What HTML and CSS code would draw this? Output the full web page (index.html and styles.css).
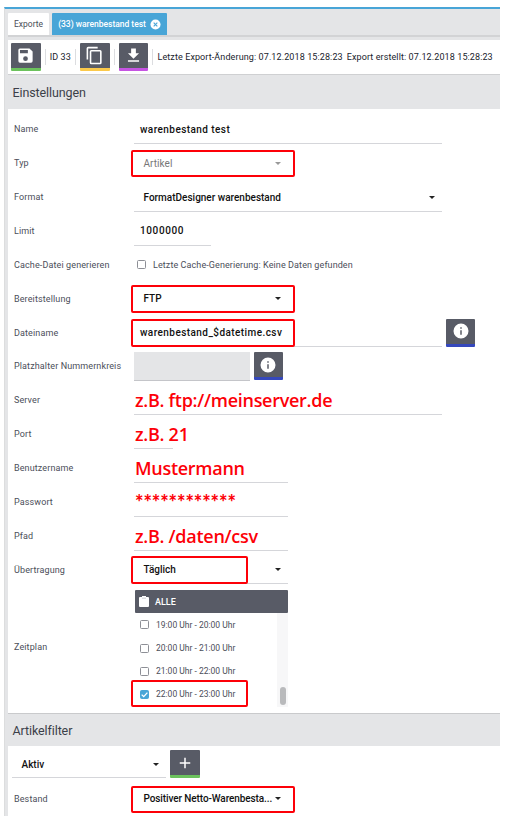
FILE: index.html
```
<!DOCTYPE html>
<html lang="de">
<head>
<meta charset="utf-8">
<title>Exporte</title>
<link rel="stylesheet" href="styles.css">
</head>
<body>
<main class="app">
  <nav class="tabs">
    <span class="tab">Exporte</span>
    <span class="tab tab-active"><span class="tab-text">(33) warenbestand test</span>
      <svg class="close" viewBox="0 0 12 12"><circle cx="6" cy="6" r="5.5" fill="#fff"/><path d="M4 4l4 4M8 4L4 8" stroke="#48a5d7" stroke-width="1.2"/></svg>
    </span>
  </nav>
  <header class="toolbar">
    <button class="btn green"><svg viewBox="0 0 24 24"><path fill="#fff" d="M17 3H5a2 2 0 0 0-2 2v14a2 2 0 0 0 2 2h14a2 2 0 0 0 2-2V7l-4-4zm-5 16a3 3 0 1 1 0-6 3 3 0 0 1 0 6zm3-10H5V5h10v4z"/></svg></button>
    <i class="sep"></i><span class="id">ID 33</span><i class="sep"></i>
    <button class="btn yellow"><svg viewBox="0 0 24 24"><path fill="#fff" d="M16 1H4a2 2 0 0 0-2 2v14h2V3h12V1zm3 4H8a2 2 0 0 0-2 2v14a2 2 0 0 0 2 2h11a2 2 0 0 0 2-2V7a2 2 0 0 0-2-2zm0 16H8V7h11v14z"/></svg></button>
    <i class="sep"></i>
    <button class="btn purple"><svg viewBox="0 0 24 24"><path fill="#fff" d="M19 9h-4V3H9v6H5l7 7 7-7zM5 18v2h14v-2H5z"/></svg></button>
    <i class="sep"></i>
    <span class="info changed">Letzte Export-Änderung: 07.12.2018 15:28:23</span>
    <span class="info created">Export erstellt: 07.12.2018 15:28:23</span>
  </header>

  <h2 class="heading">Einstellungen</h2>
  <section class="panel">
    <div class="row"><label>Name</label><div class="field wide"><span class="input">warenbestand test</span></div></div>
    <div class="row"><label>Typ</label><div class="field mid plain"><span class="select muted">Artikel</span><i class="caret muted"></i><b class="mark"></b></div></div>
    <div class="row"><label>Format</label><div class="field wide"><span class="select format">FormatDesigner warenbestand</span><i class="caret"></i></div></div>
    <div class="row"><label>Limit</label><div class="field small"><span class="input limit">1000000</span></div></div>
    <div class="row"><label>Cache-Datei generieren</label><div class="field wide plain"><i class="check"></i><span class="hint">Letzte Cache-Generierung: Keine Daten gefunden</span></div></div>
    <div class="row"><label>Bereitstellung</label><div class="field mid plain"><span class="select">FTP</span><i class="caret"></i><b class="mark"></b></div></div>
    <div class="row"><label>Dateiname</label><div class="field wide"><span class="input file">warenbestand_$datetime.csv</span><b class="mark"></b></div><button class="btn blue"><svg viewBox="0 0 24 24"><path fill="#fff" d="M12 2a10 10 0 1 0 0 20 10 10 0 0 0 0-20zm1 15h-2v-6h2v6zm0-8h-2V7h2v2z"/></svg></button></div>
    <div class="row"><label class="platz">Platzhalter Nummernkreis</label><div class="field disabled"></div><button class="btn blue"><svg viewBox="0 0 24 24"><path fill="#fff" d="M12 2a10 10 0 1 0 0 20 10 10 0 0 0 0-20zm1 15h-2v-6h2v6zm0-8h-2V7h2v2z"/></svg></button></div>
    <div class="row"><label>Server</label><div class="field wide"><span class="note server">z.B. ftp://meinserver.de</span></div></div>
    <div class="row"><label>Port</label><div class="field tiny"><span class="note">z.B. 21</span></div></div>
    <div class="row"><label>Benutzername</label><div class="field mid"><span class="note user">Mustermann</span></div></div>
    <div class="row"><label>Passwort</label><div class="field mid"><span class="note stars">************</span></div></div>
    <div class="row"><label>Pfad</label><div class="field mid"><span class="note path">z.B. /daten/csv</span></div></div>
    <div class="row"><label>Übertragung</label><div class="field mid"><span class="select">Täglich</span><i class="caret"></i><b class="mark short"></b></div></div>
    <div class="row schedule"><label>Zeitplan</label>
      <div class="times">
        <div class="all"><svg viewBox="0 0 10 11"><path fill="#fff" d="M1 1h2V0h4v1h2q1 0 1 1v8q0 1-1 1H1q-1 0-1-1V2q0-1 1-1z"/><path d="M3 2.2h4" stroke="#bbbdc3" stroke-width=".7"/></svg><span>ALLE</span></div>
        <div class="list">
          <div class="options">
            <div class="option"><i class="check"></i><span>19:00 Uhr - 20:00 Uhr</span></div>
            <div class="option"><i class="check"></i><span>20:00 Uhr - 21:00 Uhr</span></div>
            <div class="option"><i class="check"></i><span>21:00 Uhr - 22:00 Uhr</span></div>
            <div class="option"><i class="check on"><svg viewBox="0 0 9 9"><path d="M1.7 4.6l2 2 3.7-4" fill="none" stroke="#fff" stroke-width="1.3"/></svg></i><span>22:00 Uhr - 23:00 Uhr</span><b class="mark short"></b></div>
          </div>
          <div class="track"><div class="thumb"></div></div>
        </div>
      </div>
    </div>
  </section>

  <h2 class="heading second">Artikelfilter</h2>
  <section class="panel filter">
    <div class="add"><div class="field mid"><span class="select">Aktiv</span><i class="caret"></i></div><button class="btn green"><svg viewBox="0 0 24 24"><path fill="#fff" d="M19 13h-6v6h-2v-6H5v-2h6V5h2v6h6z"/></svg></button></div>
    <div class="row"><label>Bestand</label><div class="field mid plain"><span class="select stock">Positiver Netto-Warenbesta...</span><i class="caret"></i><b class="mark"></b></div></div>
  </section>
</main>
</body>
</html>
```
FILE: styles.css
```
* { box-sizing: border-box; }
body { margin: 0; background: #fff; font-family: Roboto, "Liberation Sans", sans-serif; color: #4b4e59; }
.app { width: 496px; height: 809px; margin: 7px 0 0 4px; background: #e4e5e7; border-top: 2px solid #48a5d7; border-left: 1px solid #dcddde; padding-left: 3px; overflow: hidden; }
.tabs { display: flex; height: 28px; padding-top: 4px; border-bottom: 2px solid #d2d3d5; }
.tab { display: flex; align-items: center; justify-content: center; width: 41px; height: 22px; background: #fff; font-size: 8.5px; border-radius: 1px 1px 0 0; white-space: nowrap; margin-right: 3px; }
.tab-active { width: 115px; background: #48a5d7; color: #fff; font-weight: 500; gap: 4px; }
.tab-text { letter-spacing: -.02px; }
.close { width: 11px; height: 11px; }
.toolbar { display: flex; align-items: center; height: 35px; margin-top: 3px; background: #fff; border-bottom: 1px solid #cfd0d2; padding-left: 3px; font-size: 9px; color: #20232d; white-space: nowrap; }
.btn { flex: none; display: flex; align-items: center; justify-content: center; width: 29.5px; height: 28px; padding: 0; border: 0; border-bottom: 3px solid; background: #585b66; border-radius: 1px; }
.btn svg { width: 18px; height: 18px; }
.toolbar .btn svg { width: 19px; height: 19px; }
.green { border-color: #6cc25d; }
.yellow { border-color: #fbc94b; }
.purple { border-color: #c554e2; }
.blue { border-color: #3548bd; }
.sep { width: 1px; height: 16px; background: #dcdde0; margin: 0 4.1px; }
.id { letter-spacing: .1px; }
.info { letter-spacing: .105px; }
.changed { margin-left: 0; }
.created { margin-left: 4px; }
.heading { display: flex; align-items: center; height: 34px; margin: 0; padding-left: 4.5px; font-size: 12.5px; letter-spacing: -.1px; font-weight: 400; color: #3c3f49; }
.panel { height: 605px; background: #fff; border-bottom: 1px solid #c9cacc; padding: 1.4px 0 0 6px; }
.row { display: flex; height: 33.87px; }
label { flex: none; width: 120px; padding-top: 5px; line-height: 28px; font-size: 9px; letter-spacing: .12px; white-space: nowrap; }
.field { position: relative; display: flex; align-items: center; height: 33.87px; padding: 5px 0 0 6px; border-bottom: 1px solid #d5d6da; white-space: nowrap; }
.wide { width: 308.4px; }
.mid { width: 154px; }
.small { width: 77px; }
.tiny { width: 39px; }
.plain { border-color: transparent; }
.input { font-size: 10px; font-weight: 500; color: #111; letter-spacing: .43px; }
.limit { letter-spacing: .62px; }
.select { flex: 1; padding-left: 3.5px; font-size: 10px; color: #111; font-weight: 500; }
.select.muted { color: #777; font-weight: 400; letter-spacing: .05px; }
.stock { letter-spacing: -.1px; }
.caret { border: 3px solid transparent; border-top-color: #222; border-bottom: 0; margin-right: 7px; }
.caret.muted { border-top-color: #999; }
.mark { position: absolute; left: -3px; top: 5.5px; width: 164px; height: 27.5px; border: 2px solid #fd0008; border-radius: 2px; }
.mark.short { width: 117px; }
.check { flex: none; width: 9px; height: 9px; border: 1px solid #8d8f96; border-radius: 1.5px; background: #fff; }
.field > .check { margin-left: -3px; }
.hint { font-size: 9px; letter-spacing: .09px; margin-left: 7px; }
.row > .btn { margin: 5px 0 0 3.6px; }
.disabled { width: 116px; height: 28.5px; margin-top: 5px; background: #e4e5e7; border-color: #c4c5c9; }
.note { font-family: "Open Sans", "Noto Sans", sans-serif; font-size: 18px; line-height: 24px; font-weight: 650; letter-spacing: -.28px; color: #fd0008; margin-left: -5px; }
.stars { font-family: Lato, sans-serif; font-size: 20px; font-weight: 900; letter-spacing: -.1px; }
.schedule { height: 127px; }
.schedule label { line-height: 116px; padding-top: 5px; }
.times { width: 153px; margin: 6px 0 0 1px; }
.all { display: flex; align-items: center; gap: 6px; height: 23px; padding-left: 4px; background: #585b66; color: #fff; font-size: 9px; font-weight: 500; border-radius: 1px; }
.all svg { width: 10px; height: 11px; }
.list { display: flex; height: 94px; }
.options { width: 142px; }
.option { position: relative; display: flex; align-items: center; height: 23.15px; padding-left: 5px; gap: 7px; font-size: 8.5px; }
.option .mark { left: -4px; top: -3px; }
.on { background: #48a5d7; border-color: #48a5d7; }
.on svg { display: block; width: 9px; height: 9px; margin: -1px; }
.track { display: flex; align-items: flex-end; width: 11px; padding: 0 2px 2px 3px; background: #f7f7f8; }
.thumb { width: 6px; height: 18px; border-radius: 3px; background: #b9babc; }
.second { height: 32px; }
.filter { height: 90px; border: 0; padding-top: 0; }
.add { display: flex; margin-left: -2px; height: 32px; }
.add .field { height: 32px; }
.add .btn { margin: 4px 0 0 4px; }
.filter .row { margin-top: 2px; }
```
